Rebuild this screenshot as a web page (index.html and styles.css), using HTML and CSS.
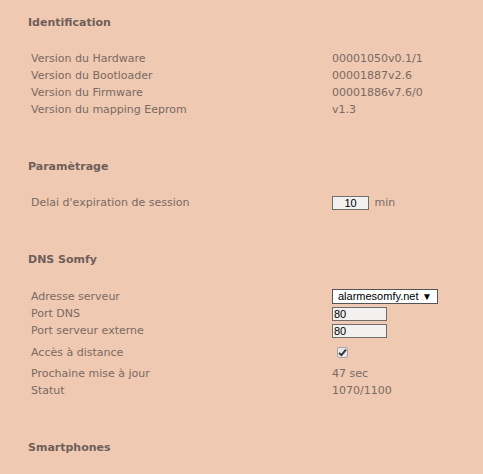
FILE: index.html
```html
<!DOCTYPE html>
<html>

<head>
    <meta charset="utf-8">
    <link rel="stylesheet" href="styles.css">
</head>

<body>
    <div class="page">
        <div class="section">
            <h3 class="section_title">Identification</h3>
            <table class="params">
                <tr><td class="label">Version du Hardware</td><td class="value">00001050v0.1/1</td></tr>
                <tr><td class="label">Version du Bootloader</td><td class="value">00001887v2.6</td></tr>
                <tr><td class="label">Version du Firmware</td><td class="value">00001886v7.6/0</td></tr>
                <tr><td class="label">Version du mapping Eeprom</td><td class="value">v1.3</td></tr>
            </table>
        </div>

        <div class="section">
            <h3 class="section_title">Paramètrage</h3>
            <table class="params">
                <tr>
                    <td class="label">Delai d'expiration de session</td>
                    <td class="value"><input class="field field_short" type="text" value="10"> min</td>
                </tr>
            </table>
        </div>

        <div class="section">
            <h3 class="section_title">DNS Somfy</h3>
            <table class="params">
                <tr class="row_select">
                    <td class="label">Adresse serveur</td>
                    <td class="value">
                        <div class="select">
                            <span>alarmesomfy.net</span>
                            <span class="select_arrow">&#9660;</span>
                        </div>
                    </td>
                </tr>
                <tr><td class="label">Port DNS</td><td class="value"><input class="field field_port" type="text" value="80"></td></tr>
                <tr><td class="label">Port serveur externe</td><td class="value"><input class="field field_port" type="text" value="80"></td></tr>
                <tr class="row_check">
                    <td class="label">Accès à distance</td>
                    <td class="value">
                        <span class="check">
                            <svg width="9" height="9" viewBox="0 0 9 9"><path d="M1 4.8 L3.4 7.2 L8 1.6" fill="none" stroke="#333" stroke-width="1.9"/></svg>
                        </span>
                    </td>
                </tr>
                <tr><td class="label">Prochaine mise à jour</td><td class="value">47 sec</td></tr>
                <tr><td class="label">Statut</td><td class="value">1070/1100</td></tr>
            </table>
        </div>

        <div class="section">
            <h3 class="section_title">Smartphones</h3>
        </div>
    </div>
</body>

</html>
```

FILE: styles.css
```css
body {
    margin: 0;
    background: #efc9b1;
}

.page {
    padding-top: 14px;
    font-family: 'DejaVu Sans', Verdana, sans-serif;
    font-size: 11px;
    color: #7a6964;
}

.section {
    margin-bottom: 40px;
}

.section_title {
    margin: 0 0 19px;
    padding-left: 28px;
    font-size: 11px;
    line-height: 17px;
    font-weight: bold;
    color: #6f5e59;
}

.params {
    border-collapse: collapse;
}

.params td {
    padding: 0;
    height: 17px;
    line-height: 17px;
    vertical-align: middle;
}

.params .label {
    width: 301px;
    padding-left: 31px;
}

.row_select td {
    height: 18px;
}

.row_check td {
    height: 26px;
}

.field {
    box-sizing: border-box;
    height: 14px;
    margin: 0;
    padding: 0 1px;
    border: 1px solid #6d6d6d;
    background: #f3f1ef;
    font-family: 'Liberation Sans', Arial, sans-serif;
    font-size: 11px;
    color: #000;
    vertical-align: middle;
}

.field_short {
    width: 37px;
    text-align: center;
    margin-right: 2px;
}

.field_port {
    width: 55px;
}

.select {
    box-sizing: border-box;
    display: flex;
    align-items: center;
    justify-content: space-between;
    width: 106px;
    height: 15px;
    padding: 0 5px 0 5px;
    border: 1px solid #555;
    background: #fff;
    font-family: 'Liberation Sans', Arial, sans-serif;
    font-size: 11px;
    color: #000;
}

.select_arrow {
    font-size: 10px;
}

.check {
    display: inline-flex;
    align-items: center;
    justify-content: center;
    box-sizing: border-box;
    width: 11px;
    height: 11px;
    margin-left: 5px;
    border: 1px solid #a8a8a8;
    border-radius: 2px;
    background: #e6e6e6;
    vertical-align: middle;
}
```
